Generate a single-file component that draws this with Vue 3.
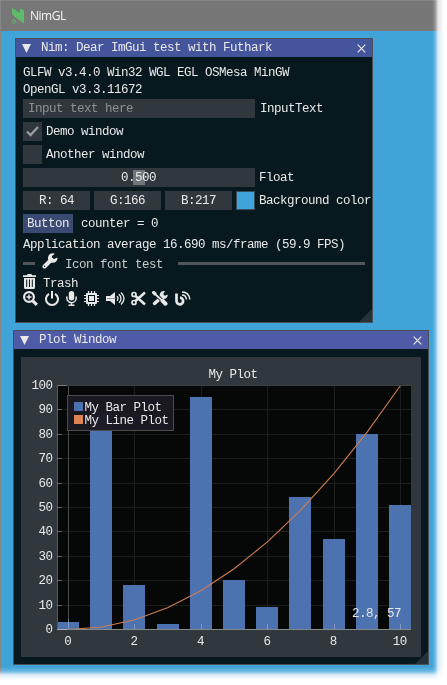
<script setup>
const channels = ['R: 64', 'G:166', 'B:217']
const bars = [3, 89, 18, 2, 95, 20, 9, 54, 37, 80, 51]
const px = (v) => 47.5 + v * 33.2
const py = (v) => 272.5 - v * 2.44
const line = bars.map((_, i) => `${px(i)},${py(i * i)}`).join(' ')
const yTicks = [0, 10, 20, 30, 40, 50, 60, 70, 80, 90, 100]
const xTicks = [0, 2, 4, 6, 8, 10]
const row = (v) => Math.round(py(v) - 0.5) + 0.5
const col = (v) => Math.round(px(v) - 0.5) + 0.5
</script>

<template>
  <div class="shell">
    <header class="caption">
      <svg class="logo" width="14" height="17" viewBox="0 0 14 17">
        <path d="M1 0L9 5V0.5L13 2.500V15.500L4.500 9.500L1 6Z" fill="#5dbb6a" />
        <circle cx="3" cy="13.500" r="1.700" fill="none" stroke="#5dbb6a" />
      </svg>
      <span>NimGL</span>
    </header>

    <main class="desk">
      <section class="win first">
        <div class="bar">
          <svg width="9" height="9" viewBox="0 0 9 9"><path d="M0 0H9L4.500 9Z" fill="#e8e8e8" /></svg>
          <span class="name">Nim: Dear ImGui test with Futhark</span>
          <svg width="9" height="9" viewBox="0 0 9 9"><path d="M.7 .7L8.300 8.300M8.300 .7L.7 8.300" stroke="#e8e8e8" stroke-width="1.200" /></svg>
        </div>
        <div class="content">
          <p class="t">GLFW v3.4.0 Win32 WGL EGL OSMesa MinGW</p>
          <p class="t">OpenGL v3.3.11672</p>
          <div class="row input-row"><div class="field wide hint">Input text here</div><span class="lab first-lab">InputText</span></div>
          <div class="row">
            <div class="check"><svg width="13" height="13" viewBox="0 0 13 13"><path d="M1 6.500L4.500 10L12 2" fill="none" stroke="#9a9da0" stroke-width="2.300" /></svg></div>
            <span class="lab">Demo window</span>
          </div>
          <div class="row"><div class="check"></div><span class="lab">Another window</span></div>
          <div class="row"><div class="field wide slider"><i class="grab"></i><span class="value">0.500</span></div><span class="lab">Float</span></div>
          <div class="row">
            <div v-for="c in channels" :key="c" class="field channel">{{ c }}</div>
            <div class="swatch"></div><span class="lab">Background color</span>
          </div>
          <div class="row"><div class="button">Button</div><span class="lab counter">counter = 0</span></div>
          <p class="t avg">Application average 16.690 ms/frame (59.9 FPS)</p>
          <div class="sep">
            <i class="dash"></i>
            <svg width="16" height="16" viewBox="0 0 16 16">
              <path d="M2.500 13.500L9 7" stroke="#e8e8e8" stroke-width="4" stroke-linecap="round" />
              <path d="M13 .8A4.800 4.800 0 1 0 15.500 4.500L12 6L9.900 4.600L10 3Z" fill="#e8e8e8" />
              <circle cx="2.700" cy="13.300" r=".7" fill="#07191f" />
            </svg>
            <span class="sep-name">Icon font test</span>
            <i class="rule"></i>
          </div>
          <div class="trash">
            <svg width="13" height="15" viewBox="0 0 13 15">
              <path d="M0 1.200H4L4.500 0H8.500L9 1.200H13V3H0ZM1 4H12V13.500Q12 15 10.500 15H2.500Q1 15 1 13.500Z" fill="#e8e8e8" />
              <path d="M3.700 5.500V13M6.500 5.500V13M9.300 5.500V13" stroke="#07191f" />
            </svg>
            <span>Trash</span>
          </div>
          <div class="icons">
            <svg width="15" height="15" viewBox="0 0 15 15" fill="none" stroke="#e8e8e8" stroke-width="2.200"><circle cx="6" cy="6" r="4.900" /><path d="M9.800 9.800L13.800 13.800" stroke-width="3.200" /><path d="M6 3.500V8.500M3.500 6H8.500" stroke-width="1.500" /></svg>
            <svg class="power" width="14" height="15" viewBox="0 0 14 15" fill="none" stroke="#e8e8e8" stroke-width="2"><path d="M4 2.800A6 6 0 1 0 10 2.800M7 0V7.500" /></svg>
            <svg class="mic" width="11" height="15" viewBox="0 0 11 15" fill="none" stroke="#e8e8e8"><rect x="2.800" y="0" width="5.400" height="9.500" rx="2.700" fill="#e8e8e8" stroke="none" /><path d="M.8 5.500V7A4.700 4.700 0 0 0 10.200 7V5.500M5.500 11.500V14M2.500 14.200H8.500" stroke-width="1.500" /></svg>
            <svg class="chip" width="15" height="15" viewBox="0 0 15 15" fill="none" stroke="#e8e8e8"><path d="M4.500 0V15M7.500 0V15M10.500 0V15M0 4.500H15M0 7.500H15M0 10.500H15" stroke-width="1.200" /><rect x="2" y="2" width="11" height="11" rx="1" fill="#e8e8e8" stroke="none" /><rect x="4.500" y="4.500" width="6" height="6" stroke="#07191f" /></svg>
            <svg class="speaker" width="19" height="15" viewBox="0 0 19 15" fill="none" stroke="#e8e8e8" stroke-width="1.300"><path d="M0 5H4L9 1V14L4 10H0Z" fill="#e8e8e8" stroke="none" /><path d="M11 5.300Q13 7.500 11 9.700M13 3.300Q17 7.500 13 11.700M15 1.500Q21 7.500 15 13.500" /><path d="M1 7.500H10" stroke="#6a7478" stroke-width=".7" /></svg>
            <svg class="cut" width="15" height="15" viewBox="0 0 15 15" fill="none" stroke="#e8e8e8"><circle cx="3" cy="3.500" r="2" stroke-width="1.700" /><circle cx="3" cy="11.500" r="2" stroke-width="1.700" /><path d="M4.500 5L14 13.500M4.500 10L14 1.500" stroke-width="2.500" /></svg>
            <svg class="tools" width="16" height="15" viewBox="0 0 16 15" fill="none" stroke="#e8e8e8"><path d="M2.500 12.500L11 5" stroke-width="3.400" stroke-linecap="round" /><path d="M13 .3A4 4 0 1 0 15.600 3.500L12.500 5L10.800 3.400Z" fill="#e8e8e8" stroke="none" /><path d="M3 2.500L10 9.500" stroke="#07191f" stroke-width="3.500" /><path d="M.5 .5L3.800 3.500" stroke-width="3.200" /><path d="M3 3L13.500 12.500" stroke-width="1.700" /><path d="M10.500 9.800L13.500 12.700" stroke-width="4" stroke-linecap="round" /></svg>
            <svg class="blog" width="16" height="15" viewBox="0 0 16 15" fill="none" stroke="#e8e8e8"><path d="M1.500 2.500V10A3.300 3.300 0 1 0 5 6.700" stroke-width="2.700" /><path d="M7 4Q11 4 11.500 8.500M7 1Q14 1 14.800 8.500" stroke-width="1.500" /></svg>
          </div>
        </div>
        <svg class="grip" width="13" height="13" viewBox="0 0 13 13"><path d="M13 0V13H0Z" fill="#24323a" /></svg>
      </section>

      <section class="win second">
        <div class="bar">
          <svg width="9" height="9" viewBox="0 0 9 9"><path d="M0 0H9L4.500 9Z" fill="#e8e8e8" /></svg>
          <span class="name">Plot Window</span>
          <svg width="9" height="9" viewBox="0 0 9 9"><path d="M.7 .7L8.300 8.300M8.300 .7L.7 8.300" stroke="#e8e8e8" stroke-width="1.200" /></svg>
        </div>
        <svg class="plot" width="400" height="300" viewBox="0 0 400 300">
          <rect width="400" height="300" fill="#31383d" />
          <rect x="36" y="28" width="354" height="245" fill="#060807" />
          <g stroke="#1c1e1e">
            <path v-for="v in yTicks" :key="v" :d="`M36 ${row(v)}H390`" />
            <path v-for="v in xTicks" :key="v" :d="`M${col(v)} 28V273`" />
          </g>
          <path d="M47.500 28V273" stroke="#4a4b4b" />
          <svg x="36" y="28" width="354" height="245" viewBox="36 28 354 245">
            <rect v-for="(v, i) in bars" :key="i" :x="Math.floor(px(i) - 11)" :y="Math.floor(py(v))" width="22" :height="273 - Math.floor(py(v))" fill="#4c72b0" />
            <polyline :points="line" fill="none" stroke="#cf7d50" stroke-width="1.100" />
          </svg>
          <path d="M36.500 28V273" stroke="#55595b" />
          <path d="M36 28.500H390" stroke="#3c4042" />
          <path d="M36 272.500H390" stroke="#868a8d" />
          <g stroke="#ffffff" stroke-opacity=".3">
            <path v-for="v in yTicks" :key="v" :d="`M36 ${row(v)}h${v % 100 ? 5 : 10}`" />
            <path v-for="v in xTicks" :key="v" :d="`M${col(v)} 272v${v ? -5 : -10}`" />
          </g>
          <g class="txt">
            <text x="212" y="21" text-anchor="middle">My Plot</text>
            <text v-for="v in yTicks" :key="v" x="31.500" :y="row(v) + 3.500" text-anchor="end">{{ v }}</text>
            <text v-for="v in xTicks" :key="v" :x="px(v) - 0.800" y="288" text-anchor="middle">{{ v }}</text>
            <text x="331" y="260">2.8, 57</text>
          </g>
          <rect x="46.500" y="38.500" width="106" height="35" fill="#1b1a22" fill-opacity=".96" stroke="#4b4b51" />
          <rect x="53" y="45" width="9" height="9" fill="#4c72b0" />
          <rect x="53" y="58" width="9" height="9" fill="#dd8452" />
          <g class="txt">
            <text x="63.500" y="54">My Bar Plot</text>
            <text x="63.500" y="67">My Line Plot</text>
          </g>
        </svg>
        <svg class="grip" width="13" height="13" viewBox="0 0 13 13"><path d="M13 0V13H0Z" fill="#24323a" /></svg>
      </section>
    </main>
  </div>
</template>

<style>
body { background: #fff; }
</style>

<style scoped>
* { box-sizing: border-box; }
svg { display: block; flex: none; }
.shell {
  width: 447px; height: 685px; overflow: hidden;
  display: flex; flex-direction: column;
  border-left: 1px solid #878787;
  font: 12.5px/17px "Liberation Mono", monospace;
  letter-spacing: -0.501px;
  color: #e8e8e8;
  background: #41a4d9;
  -webkit-mask-image: linear-gradient(to right, #000 432px, rgba(0,0,0,.8) 435px, rgba(0,0,0,.2) 438px, transparent 444px), linear-gradient(to bottom, #000 667px, rgba(0,0,0,.8) 671px, rgba(0,0,0,.2) 675px, transparent 680px);
  mask-image: linear-gradient(to right, #000 432px, rgba(0,0,0,.8) 435px, rgba(0,0,0,.2) 438px, transparent 444px), linear-gradient(to bottom, #000 667px, rgba(0,0,0,.8) 671px, rgba(0,0,0,.2) 675px, transparent 680px);
  mask-composite: intersect;
}
.caption {
  height: 31px; flex: none; display: flex; align-items: center; gap: 5px;
  padding-left: 10px; background: #777; border-top: 1px solid #858585;
  font: 12px/16px "Open Sans", sans-serif; letter-spacing: -0.5px; color: #f4f4f4;
}
.desk { display: flex; flex-direction: column; align-items: flex-start; gap: 7px; padding-top: 7px; }
.win { position: relative; background: #07191f; border: 1px solid #4b4d57; white-space: pre; }
.first { width: 358px; height: 285px; margin-left: 14px; }
.second { width: 416px; height: 335px; margin-left: 12px; }
.bar { height: 18px; display: flex; align-items: center; padding: 0 6px; background: #44559b; }
.second .bar { background: #505ba8; }
.name { flex: 1; padding-left: 10px; line-height: 19px; height: 18px; }
.content { padding: 6px 7px 0; }
.t { margin: 0; height: 17px; line-height: 20px; }
.input-row { margin-top: 2px; }
.row { display: flex; align-items: center; gap: 4px; height: 19px; margin-bottom: 4px; }
.lab { height: 19px; line-height: 21px; }
.first-lab { padding-left: 1px; }
.field { height: 19px; background: #31383d; flex: none; line-height: 21px; }
.wide { width: 232px; }
.hint { padding-left: 5px; color: #8b9093; }
.check { width: 19px; height: 19px; flex: none; background: #31383d; display: grid; place-items: center; }
.slider { display: grid; justify-items: center; align-items: center; }
.slider > * { grid-area: 1 / 1; }
.value { height: 19px; padding-right: 1px; }
.grab { width: 12px; height: 15px; background: #70777a; }
.channel { width: 67px; text-align: center; }
.swatch { width: 19px; height: 19px; flex: none; background: #41a4d9; border: 1px solid #36505e; }
.button { width: 50px; height: 19px; line-height: 21px; text-align: center; background: #3b4a72; }
.counter { padding-left: 4px; }
.avg { margin-top: -2px; }
.sep { display: flex; align-items: center; height: 16px; margin-top: 1px; }
.sep i { height: 3px; background: #51575b; margin-top: 5px; }
.dash { width: 12px; margin-right: 7px; }
.sep .rule { flex: 1; margin-left: 12px; }
.sep-name { padding: 8px 0 0 7px; width: 105px; margin-right: 3px; color: #c9cccd; }
.trash { display: flex; gap: 7px; height: 15px; margin-top: 5px; line-height: 21px; }
.icons { display: flex; margin-top: 2px; }
.power { margin-left: 7px; }
.mic, .chip, .speaker, .blog { margin-left: 7px; }
.cut, .tools { margin-left: 6px; }
.plot { margin: 8px 0 0 7px; }
.grip { position: absolute; right: 0; bottom: 0; }
.txt { fill: #e8e8e8; }
</style>
